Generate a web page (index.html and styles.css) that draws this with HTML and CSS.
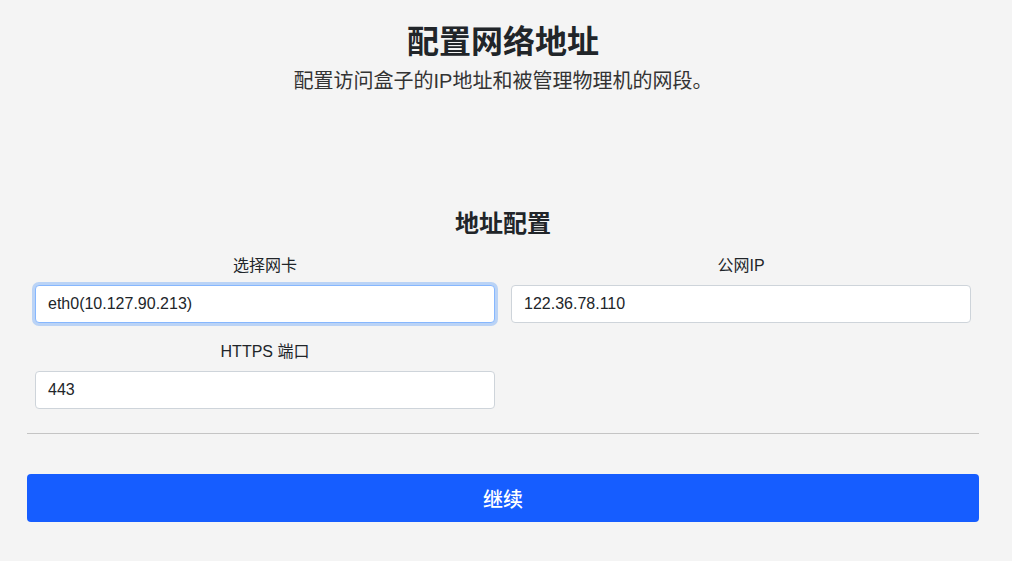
FILE: index.html
```html
<!DOCTYPE html>
<html lang="zh-CN">
<head>
<meta charset="utf-8">
<link rel="stylesheet" href="styles.css">
</head>
<body>
<div class="page">
  <header class="header">
    <h1 class="title">配置网络地址</h1>
    <p class="subtitle">配置访问盒子的IP地址和被管理物理机的网段。</p>
  </header>
  <section class="section">
    <h2 class="section-title">地址配置</h2>
    <div class="grid">
      <div class="field">
        <label class="label">选择网卡</label>
        <div class="input focused">eth0(10.127.90.213)</div>
      </div>
      <div class="field">
        <label class="label">公网IP</label>
        <div class="input">122.36.78.110</div>
      </div>
      <div class="field">
        <label class="label">HTTPS 端口</label>
        <div class="input">443</div>
      </div>
    </div>
  </section>
  <hr class="divider">
  <button class="btn">继续</button>
</div>
</body>
</html>
```
FILE: styles.css
```css
html, body {
  margin: 0;
  padding: 0;
  background: #f4f4f4;
}
body {
  font-family: "Liberation Sans", "Noto Sans CJK SC", sans-serif;
  color: #212529;
}
.page {
  width: 952px;
  margin: 0 0 0 27px;
  padding-top: 24px;
}
.header {
  text-align: center;
}
.title {
  margin: 0;
  font-size: 32px;
  line-height: 36px;
  font-weight: 700;
  color: #212529;
}
.subtitle {
  margin: 8px 0 0;
  font-size: 20px;
  line-height: 27px;
  color: #333;
}
.section {
  margin-top: 116px;
  padding: 0 8px;
}
.section-title {
  margin: 0 0 18px;
  text-align: center;
  font-size: 24px;
  line-height: 26px;
  font-weight: 700;
}
.grid {
  display: grid;
  grid-template-columns: 1fr 1fr;
  column-gap: 16px;
  row-gap: 18px;
}
.field {
  display: flex;
  flex-direction: column;
}
.label {
  text-align: center;
  font-size: 16px;
  line-height: 22px;
  margin-bottom: 8px;
  color: #212529;
}
.input {
  box-sizing: border-box;
  height: 38px;
  border: 1px solid #ced4da;
  border-radius: 4px;
  background: #fff;
  padding: 0 12px;
  display: flex;
  align-items: center;
  font-size: 16px;
  color: #212529;
}
.input.focused {
  border-color: #86b7fe;
  box-shadow: 0 0 0 3px rgba(13, 110, 253, 0.25);
}
.divider {
  margin: 24px 0 0;
  border: 0;
  border-top: 1px solid #c4c4c4;
  height: 0;
}
.btn {
  display: block;
  width: 100%;
  margin-top: 40px;
  height: 48px;
  border: 0;
  border-radius: 4px;
  background: #165dff;
  color: #fff;
  font-family: "Liberation Sans", "Noto Sans CJK SC", sans-serif;
  font-size: 20px;
  font-weight: 500;
}
```
